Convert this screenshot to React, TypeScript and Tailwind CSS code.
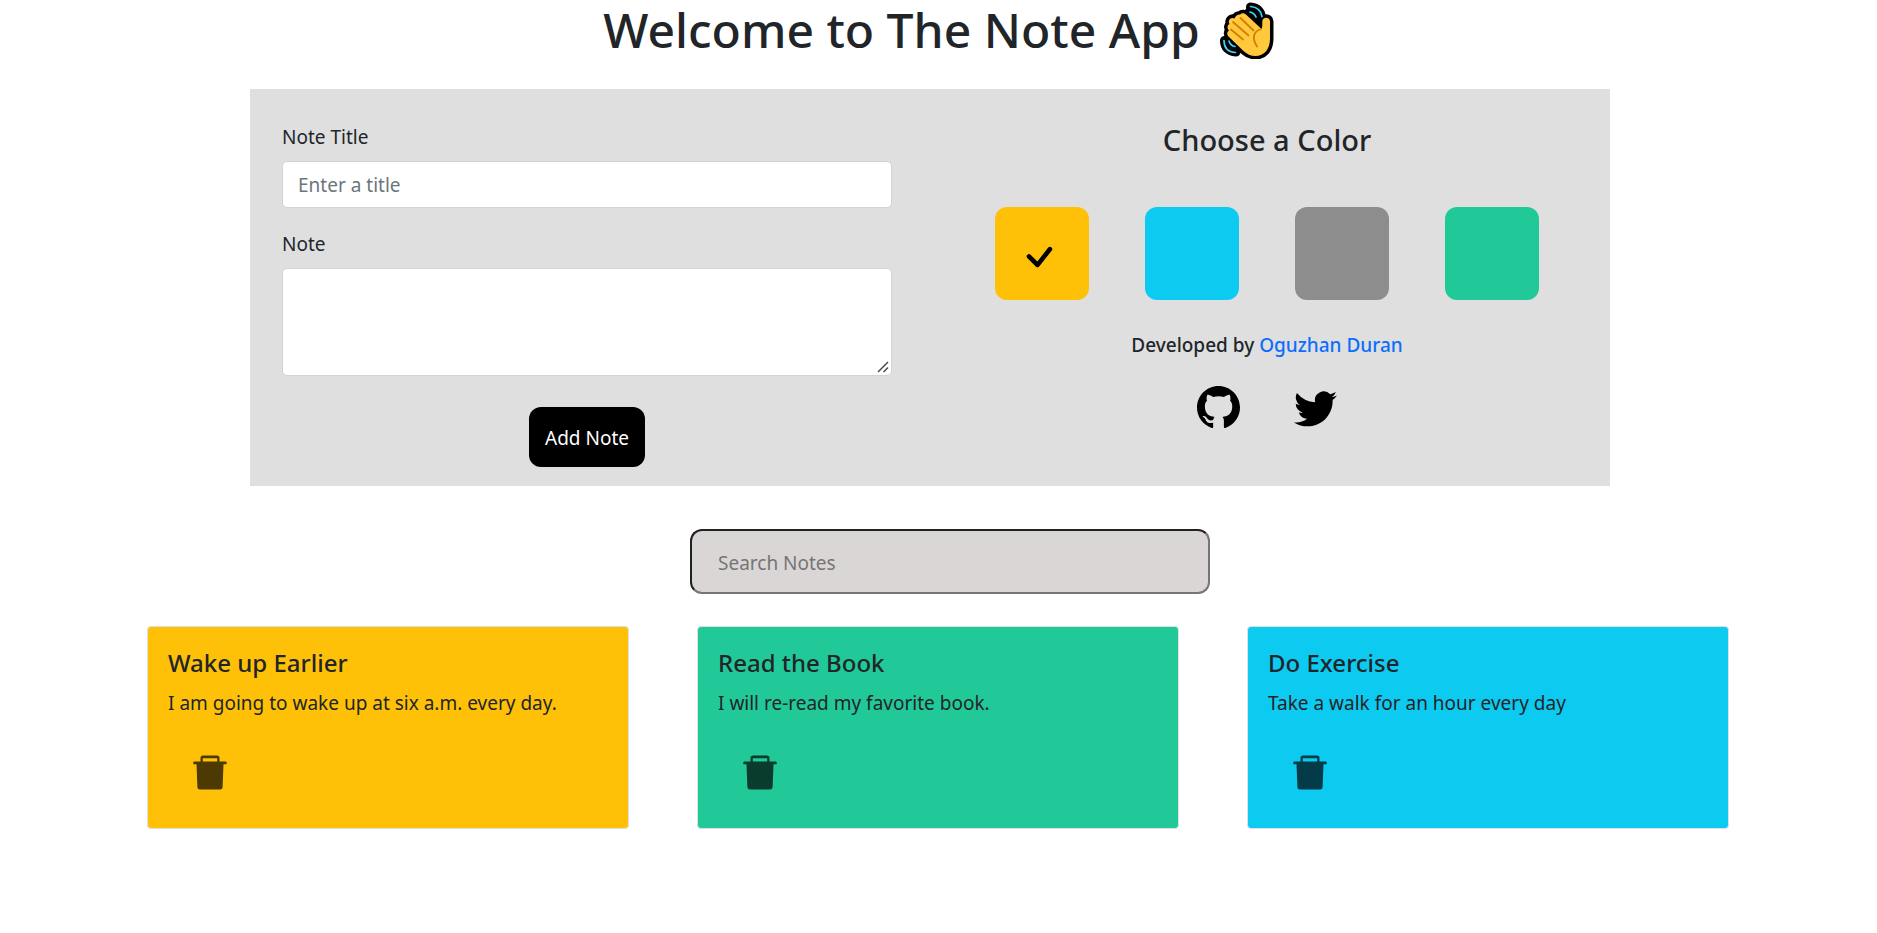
import { useState } from "react";
import { BsCheck, BsGithub, BsTwitter } from "react-icons/bs";

type Note = { id: number; title: string; text: string; color: string };

const swatches = [
  { name: "Yellow", color: "bg-[#ffc107]" },
  { name: "Cyan", color: "bg-[#0dcaf0]" },
  { name: "Gray", color: "bg-[#8d8d8d]" },
  { name: "Green", color: "bg-[#22c998]" },
];

const initialNotes: Note[] = [
  { id: 1, title: "Wake up Earlier", text: "I am going to wake up at six a.m. every day.", color: "bg-[#ffc107]" },
  { id: 2, title: "Read the Book", text: "I will re-read my favorite book.", color: "bg-[#22c998]" },
  { id: 3, title: "Do Exercise", text: "Take a walk for an hour every day", color: "bg-[#0dcaf0]" },
];

const handShape =
  "M20 13.500c2-2 4.500-1.500 6.500 0.500l15 14c1-2 0.800-4 0.800-7.500c0-5 7.700-5 7.700 0v17c0 11-6 17.500-14.500 17.500c-5 0-8.500-2-12-5L9 36c-3-3-1.500-5.500 0-6.500c-2.500-3-1.500-5.500 0.500-6.500c-2-3.500 1-7.500 5-5.500c1-2.500 3-4 5.500-4z";

function WavingHand() {
  return (
    <svg viewBox="0 0 54 58" className="h-[58px] w-[54px]" role="img" aria-label="Waving hand">
      <g fill="none" stroke="#000" strokeWidth="9" strokeLinecap="round" strokeLinejoin="round">
        <path d="M30.500 6c6 .5 10 4 11 10" />
        <path d="M29 11c4 1 6 3 7 7" />
        <path d="M4.500 39.500c0 7 4 11 11.500 11.500" />
        <path d="M9 39c1 4 3 6 7 7" />
      </g>
      <path d={handShape} fill="#ffc83d" stroke="#000" strokeWidth="7" strokeLinejoin="round" />
      <path d={handShape} fill="#ffc83d" />
      <g fill="none" stroke="#d67d00" strokeWidth="1.8" strokeLinecap="round">
        <path d="M20.500 17l13 12.500" />
        <path d="M13 21l15.500 13.500" />
        <path d="M11 28.500l12 10" />
        <path d="M41 28c-7.500 2.500-9.500 9-4 17.500" />
      </g>
      <g fill="none" stroke="#3bd5ff" strokeWidth="1.7" strokeLinecap="round">
        <path d="M30.500 5.500c6 .5 10.500 4 11.500 10" />
        <path d="M30 11c3 .8 5 2.500 6 5" />
        <path d="M4 39.500c0 7 4 11.500 11.500 12" />
        <path d="M9 40c1 3 3 5 6 5.500" />
      </g>
    </svg>
  );
}

function TrashIcon() {
  return (
    <svg viewBox="0 0 34 35" className="h-[35px] w-[34px]" fill="currentColor" aria-hidden="true">
      <path
        fillRule="evenodd"
        d="M7.500 6.500V3A2.500 2.500 0 0 1 10 .5h14A2.500 2.500 0 0 1 26.500 3v3.500h6a1.200 1.200 0 0 1 1.200 1.200v1.500h-3.200l-.9 23a2.400 2.400 0 0 1-2.400 2.300H6.800a2.400 2.400 0 0 1-2.400-2.300l-.9-23H.3V7.700a1.200 1.200 0 0 1 1.200-1.200zM9.800 6.500h14.400V3.200H9.800z"
      />
    </svg>
  );
}

export default function App() {
  const [selected, setSelected] = useState(0);
  const [notes, setNotes] = useState(initialNotes);
  const [query, setQuery] = useState("");
  const [title, setTitle] = useState("");
  const [text, setText] = useState("");

  const addNote = () => {
    if (!title && !text) return;
    setNotes([...notes, { id: Date.now(), title, text, color: swatches[selected].color }]);
    setTitle("");
    setText("");
  };

  const visible = notes.filter((n) => n.title.toLowerCase().includes(query.toLowerCase()));

  return (
    <div className="bg-white font-['Noto_Sans','Open_Sans',sans-serif] text-[19px] leading-[30px] text-[#212529]">
      <h1 className="flex h-[60px] items-center justify-center gap-5 text-[48px] leading-[60px] font-medium">
        Welcome to The Note App <WavingHand />
      </h1>

      <section className="mt-[29px] mr-[267px] ml-[250px] flex bg-[#dfdfdf]">
        <form
          className="flex basis-[674px] flex-col px-8 pt-[33px] pb-[19px]"
          onSubmit={(e) => {
            e.preventDefault();
            addNote();
          }}
        >
          <label htmlFor="title">Note Title</label>
          <input
            id="title"
            type="text"
            placeholder="Enter a title"
            value={title}
            onChange={(e) => setTitle(e.target.value)}
            className="mt-[9px] h-[47px] rounded-[5px] border border-[#ced4da] bg-white px-[15px] placeholder:text-[#6c757d]"
          />
          <label htmlFor="note" className="mt-[21px]">
            Note
          </label>
          <div className="relative mt-[9px] flex">
            <textarea
              id="note"
              value={text}
              onChange={(e) => setText(e.target.value)}
              className="h-[108px] w-full resize-y rounded-[5px] border border-[#ced4da] bg-white px-[15px] py-2 [&::-webkit-resizer]:bg-transparent"
            />
            <svg
              viewBox="0 0 12 12"
              className="pointer-events-none absolute right-[3px] bottom-[3px] size-3"
              fill="none"
              stroke="#4a4a4a"
              strokeWidth="1.5"
              aria-hidden="true"
            >
              <path d="M1 11L11 1M6.500 11L11 6.500" />
            </svg>
          </div>
          <button type="submit" className="mt-[31px] h-[60px] self-center rounded-xl bg-black px-4 pt-[2px] text-white">
            Add Note
          </button>
        </form>

        <div className="flex flex-1 flex-col items-center pt-8">
          <h2 className="text-[29px] leading-[38px] font-medium">Choose a Color</h2>
          <div className="mt-12 flex gap-14">
            {swatches.map((s, i) => (
              <button
                key={s.name}
                type="button"
                aria-label={s.name}
                aria-pressed={selected === i}
                onClick={() => setSelected(i)}
                className={`flex h-[93px] w-[94px] items-center justify-center rounded-xl text-black ${s.color}`}
              >
                {selected === i && <BsCheck className="mt-[6px] mr-[6px] size-[50px]" />}
              </button>
            ))}
          </div>
          <p className="mt-[30px] font-medium">
            Developed by{" "}
            <a href="#developer" className="text-[#0d6efd]">
              Oguzhan Duran
            </a>
          </p>
          <div className="mt-[26px] flex gap-[54px] text-black">
            <a href="#github" aria-label="GitHub">
              <BsGithub className="size-[43px]" />
            </a>
            <a href="#twitter" aria-label="Twitter">
              <BsTwitter className="size-[43px]" />
            </a>
          </div>
        </div>
      </section>

      <div className="mt-[43px] flex justify-center pl-[23px]">
        <input
          type="search"
          aria-label="Search Notes"
          placeholder="Search Notes"
          value={query}
          onChange={(e) => setQuery(e.target.value)}
          className="h-[65px] w-[520px] rounded-xl border-2 border-t-[#212121] border-r-[#767676] border-b-[#767676] border-l-[#212121] bg-[#dad6d5] px-[26px] pt-[2px] placeholder:text-[#757575]"
        />
      </div>

      <main className="mt-8 mr-[148px] ml-[147px] grid grid-cols-3 gap-[68px]">
        {visible.map((n) => (
          <article key={n.id} className={`h-[203px] rounded-[4px] border border-[#dfdfdf] px-5 pt-[21px] ${n.color}`}>
            <h3 className="text-[24px] leading-[30px] font-medium">{n.title}</h3>
            <p className="mt-[10px]">{n.text}</p>
            <button
              type="button"
              aria-label={`Delete ${n.title}`}
              onClick={() => setNotes(notes.filter((m) => m.id !== n.id))}
              className="mt-[37px] ml-[25px] block text-black/70"
            >
              <TrashIcon />
            </button>
          </article>
        ))}
      </main>
    </div>
  );
}
